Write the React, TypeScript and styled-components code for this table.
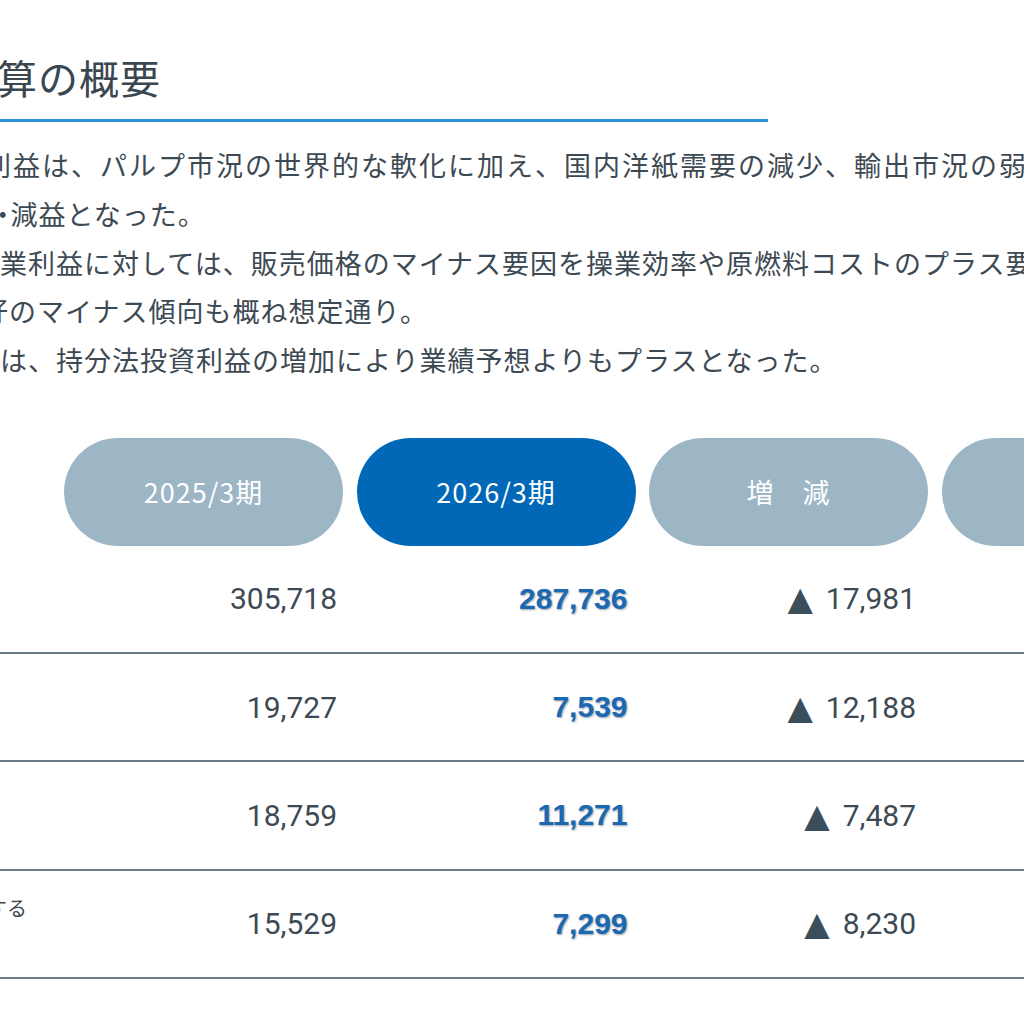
import React from "react";
import styled, { createGlobalStyle } from "styled-components";

const GlobalStyle = createGlobalStyle`
  html, body { margin: 0; padding: 0; background: #ffffff; }
  body {
    font-family: "Noto Sans CJK JP", "Noto Sans", sans-serif;
    color: #3d4a53;
  }
  #root { width: 1024px; height: 1024px; overflow: hidden; }
`;

const Page = styled.div`
  width: 1024px;
  height: 1024px;
  overflow: hidden;
  display: flex;
  flex-direction: column;
  background: #ffffff;
`;

const TitleBlock = styled.header`
  width: 768px;
  padding-top: 52px;
  padding-bottom: 17px;
  border-bottom: 3px solid #2a91d6;
  overflow: hidden;
`;

const Title = styled.h1<{ $shift: number }>`
  margin: 0 0 0 ${(p) => p.$shift}px;
  font-size: 40px;
  line-height: 50px;
  font-weight: 400;
  letter-spacing: 1px;
  color: #3b4750;
  white-space: nowrap;
`;

const Body = styled.div`
  margin-top: 19px;
  display: flex;
  flex-direction: column;
`;

const Line = styled.p<{ $shift: number; $spacing?: number }>`
  margin: 0 0 0 ${(p) => p.$shift}px;
  font-size: 27px;
  line-height: 48.75px;
  letter-spacing: ${(p) => p.$spacing ?? 1}px;
  color: #3d4a53;
  white-space: nowrap;
`;

const Half = styled.span`
  font-feature-settings: "halt";
`;

const COLS = "240.5px repeat(4, 279px)";

const Table = styled.div`
  margin-top: 53px;
  margin-left: -190px;
  display: flex;
  flex-direction: column;
  width: max-content;
`;

const HeaderRow = styled.div`
  display: grid;
  grid-template-columns: ${COLS};
  column-gap: 13.5px;
  height: 108px;
`;

const Row = styled.div`
  display: grid;
  grid-template-columns: ${COLS};
  column-gap: 13.5px;
  align-items: center;
  height: 108.3px;
  box-sizing: border-box;
  border-bottom: 2px solid #6c7c86;
`;

const Pill = styled.div<{ $active?: boolean }>`
  display: flex;
  align-items: center;
  justify-content: center;
  height: 108px;
  border-radius: 54px;
  background: ${(p) => (p.$active ? "#0068b7" : "#9db6c6")};
  color: #ffffff;
  font-size: 27px;
  letter-spacing: 1px;
  white-space: nowrap;
`;

const Label = styled.div`
  padding-left: 17px;
  padding-bottom: 6px;
  font-size: 20px;
  line-height: 27px;
  color: #3d4a53;
  white-space: nowrap;
`;

const Prev = styled.div`
  text-align: right;
  padding-right: 6px;
  font-family: Roboto, "Liberation Sans", sans-serif;
  font-size: 30px;
  color: #3d4a53;
`;

const Current = styled.div`
  text-align: right;
  padding-right: 8px;
  font-family: "Liberation Sans", Arial, sans-serif;
  font-weight: 700;
  font-size: 30px;
  color: #1c69b2;
  text-shadow: 1px 1px 2px rgba(30, 50, 70, 0.45);
`;

const Diff = styled.div`
  display: flex;
  justify-content: flex-end;
  align-items: center;
  gap: 13px;
  padding-right: 12px;
  font-family: Roboto, "Liberation Sans", sans-serif;
  font-size: 30px;
  color: #3d4a53;
`;

const Triangle = styled.span`
  font-family: "DejaVu Sans", sans-serif;
  font-size: 33px;
  line-height: 1;
  color: #3b4e5b;
`;

type Item = { label: string[]; prev: string; cur: string; diff: string };

const rows: Item[] = [
  { label: ["売上高"], prev: "305,718", cur: "287,736", diff: "17,981" },
  { label: ["営業利益"], prev: "19,727", cur: "7,539", diff: "12,188" },
  { label: ["経常利益"], prev: "18,759", cur: "11,271", diff: "7,487" },
  {
    label: ["親会社株主に帰属する", "当期純利益"],
    prev: "15,529",
    cur: "7,299",
    diff: "8,230",
  },
];

export default function App() {
  return (
    <>
      <GlobalStyle />
      <Page>
        <TitleBlock>
          <Title $shift={-44}>決算の概要</Title>
        </TitleBlock>
        <Body>
          <Line $shift={-16} $spacing={2}>
            利益は、パルプ市況の世界的な軟化に加え、国内洋紙需要の減少、輸出市況の弱含みにより
          </Line>
          <Line $shift={-4}>
            <Half>・</Half>減益となった。
          </Line>
          <Line $shift={0}>
            業利益に対しては、販売価格のマイナス要因を操業効率や原燃料コストのプラス要因で
          </Line>
          <Line $shift={-19}>好のマイナス傾向も概ね想定通り。</Line>
          <Line $shift={0}>
            は、持分法投資利益の増加により業績予想よりもプラスとなった。
          </Line>
        </Body>
        <Table>
          <HeaderRow>
            <div />
            <Pill>2025/3期</Pill>
            <Pill $active>2026/3期</Pill>
            <Pill>増　減</Pill>
            <Pill />
          </HeaderRow>
          {rows.map((r) => (
            <Row key={r.prev}>
              <Label>
                {r.label.map((l) => (
                  <div key={l}>{l}</div>
                ))}
              </Label>
              <Prev>{r.prev}</Prev>
              <Current>{r.cur}</Current>
              <Diff>
                <Triangle>▲</Triangle>
                <span>{r.diff}</span>
              </Diff>
              <div />
            </Row>
          ))}
        </Table>
      </Page>
    </>
  );
}
